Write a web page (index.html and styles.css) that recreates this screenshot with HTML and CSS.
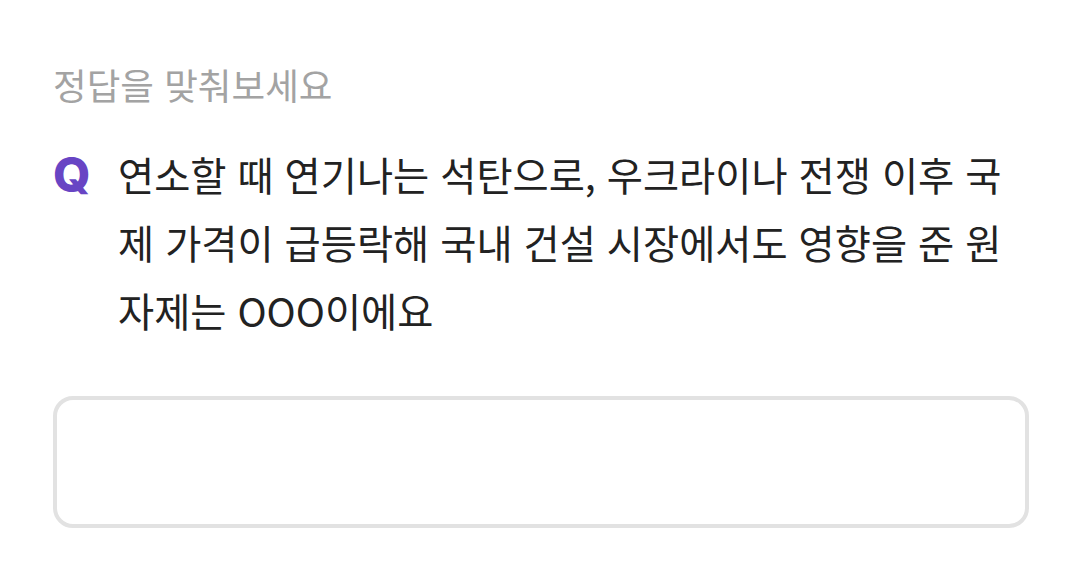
FILE: index.html
```html
<!DOCTYPE html>
<html lang="ko">
<head>
<meta charset="utf-8">
<link rel="stylesheet" href="styles.css">
</head>
<body>
<main class="quiz">
  <h2 class="title">정답을 맞춰보세요</h2>
  <div class="question">
    <span class="q-mark">Q</span>
    <p class="q-text">연소할 때 연기나는 석탄으로, 우크라이나 전쟁 이후 국제 가격이 급등락해 국내 건설 시장에서도 영향을 준 원자제는 OOO이에요</p>
  </div>
  <div class="answer-box"></div>
</main>
</body>
</html>
```

FILE: styles.css
```css
html, body {
  margin: 0;
  padding: 0;
  background: #ffffff;
}
.quiz {
  width: 1080px;
  height: 576px;
  box-sizing: border-box;
  padding: 59px 51px 0 53px;
  font-family: "Noto Sans CJK KR", "Noto Sans", sans-serif;
}
.title {
  margin: 0;
  font-size: 36.6px;
  font-weight: 400;
  line-height: 52px;
  color: #a3a3a3;
}
.question {
  display: flex;
  align-items: flex-start;
  margin-top: 29px;
}
.q-mark {
  flex: 0 0 65px;
  font-family: "Inter", "Roboto", "Liberation Sans", sans-serif;
  font-weight: 800;
  font-size: 48px;
  line-height: 70px;
  color: #6845c4;
}
.q-text {
  margin: 0;
  flex: 1;
  font-size: 39.3px;
  line-height: 68px;
  color: #222222;
  word-break: break-all;
}
.answer-box {
  margin-top: 52px;
  height: 132px;
  box-sizing: border-box;
  border: 4px solid #e2e2e2;
  border-radius: 20px;
}
```
